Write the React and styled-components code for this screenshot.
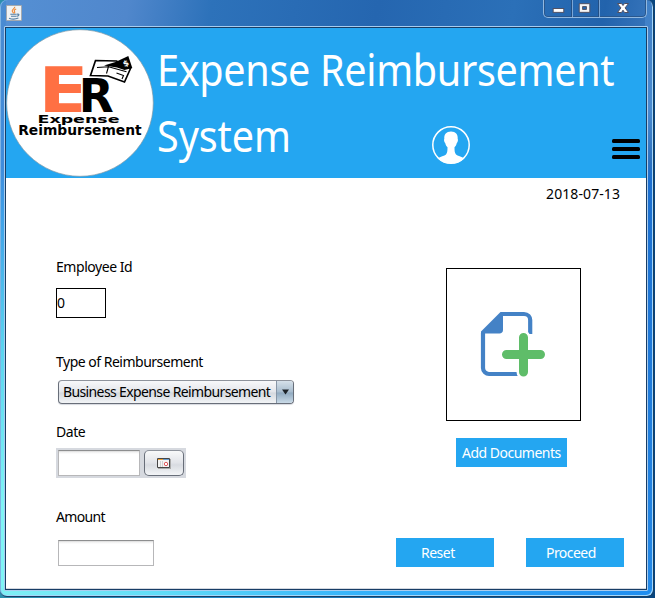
import React from 'react';
import styled, { createGlobalStyle } from 'styled-components';

const Global = createGlobalStyle`
  * { box-sizing: border-box; }
  html, body { margin: 0; padding: 0; overflow: hidden; }
  body { font-family: "Noto Sans", sans-serif; font-size: 14px; color: #000; }
`;

const Desktop = styled.div`
  width: 655px;
  height: 598px;
  background: linear-gradient(90deg, #2b8fae 0, #2187c8 35%, #07457f 100%);
`;

const Window = styled.div`
  display: flex;
  flex-direction: column;
  width: 654px;
  height: 597px;
  padding: 0 5px 5px 4px;
  border: solid #173f66;
  border-width: 0 1px 1px 0;
  border-radius: 7px 7px 7px 7px;
  box-shadow: inset -1px -1px 0 #a5d8fa, inset 1px 0 0 #7fb4e4;
  background:
    linear-gradient(90deg, #7ff0f5 0, #5fdcf8 25%, #35b2fa 55%, #1f8df0 100%) 0 100% / 100% 8px no-repeat,
    linear-gradient(180deg, #4b8bd0 0, #3f8cdc 28%, #3fa0e8 36%, #5ad4f0 58%, #7ff5f6 85%) 0 0 / 6px 100% no-repeat,
    linear-gradient(180deg, #3f7fc6 0, #4a8bd0 18%, #2d72c0 27%, #1c6fd0 30%, #2389e8 100%) 100% 0 / 8px 100% no-repeat,
    linear-gradient(100deg, #5590d4 0, #5087cc 17%, #2d72ba 28%, #2566b0 50%, #2b70b8 68%, #2263ac 80%, #437fc4 90%, #4780c4 100%);
`;

const TitleBar = styled.div`
  display: flex;
  justify-content: space-between;
  height: 26px;
  flex: none;
  padding: 0 0 0 2px;
`;

const AppIcon = styled.svg`
  width: 16px;
  height: 16px;
  margin-top: 5px;
`;

const Controls = styled.div`
  display: flex;
  width: 104px;
  height: 18px;
  margin-right: 1px;
  border: 1px solid #91b8e0;
  border-top: 0;
  border-radius: 0 0 5px 5px;
  box-shadow: inset 0 -1px 0 #29578d, inset 1px 0 0 #29578d, inset -1px 0 0 #29578d;
`;

const Control = styled.div`
  width: ${(p) => p.$w}px;
  height: 17px;
  border-right: ${(p) => (p.$last ? 0 : '1px solid #234f85')};
  box-shadow: ${(p) => (p.$last ? 'none' : '1px 0 0 #7ba6d6')};
  svg { display: block; width: 100%; height: 17px; }
`;

const Client = styled.div`
  display: flex;
  flex-direction: column;
  width: 644px;
  height: 565px;
  border: 1px solid #a9cdef;
  border-radius: 1px;
  flex: none;
`;

const Pane = styled.div`
  flex: 1;
  border: 1px solid #173d66;
  background: #fff;
  box-shadow: inset 0 -1px 0 #d4d8e0;
`;

const Header = styled.header`
  display: grid;
  grid-template-columns: 151px 275px 1fr 28px;
  grid-template-rows: 75px 75px;
  height: 150px;
  padding-right: 6px;
  background: #24a6f1;
`;

const Logo = styled.svg`
  grid-row: 1 / 3;
  width: 150px;
  height: 150px;
`;

const TitleLine = styled.div`
  grid-column: ${(p) => (p.$wide ? '2 / 5' : '2 / 3')};
  font-size: 43px;
  line-height: 60px;
  padding-top: ${(p) => p.$top}px;
  height: 75px;
  letter-spacing: ${(p) => p.$spacing}px;
  transform: scaleX(0.92);
  transform-origin: 0 0;
  white-space: nowrap;
  color: #fff;
`;

const Avatar = styled.svg`
  width: 38px;
  height: 38px;
  margin-top: 23px;
`;

const Menu = styled.svg`
  width: 28px;
  height: 22px;
  margin-top: 35px;
`;

const Today = styled.div`
  height: 32px;
  padding-right: 26px;
  text-align: right;
  line-height: 32px;
  letter-spacing: 0.08px;
`;

const Content = styled.div`
  display: flex;
  justify-content: space-between;
  padding: 47px 22px 0 50px;
`;

const Form = styled.div`
  display: flex;
  flex-direction: column;
  align-items: flex-start;
  width: 240px;
`;

const Label = styled.label`
  height: 20px;
  line-height: 20px;
  letter-spacing: ${(p) => p.$spacing}px;
  margin-bottom: ${(p) => p.$gap}px;
  white-space: nowrap;
`;

const IdField = styled.div`
  width: 50px;
  height: 30px;
  margin-bottom: 34px;
  border: 1px solid #000;
  line-height: 28px;
`;

const Combo = styled.div`
  display: flex;
  width: 236px;
  height: 24px;
  margin: 0 0 18px 2px;
  border: 1px solid #686e79;
  border-top-color: #8e939c;
  border-radius: 4px;
  overflow: hidden;
  background: linear-gradient(#f7f8fa, #e4e6eb 48%, #d5d9df 55%, #f2f4f6);
  box-shadow: 0 1px 1px #d6d9df;
`;

const ComboText = styled.div`
  flex: 1;
  min-width: 0;
  padding-left: 4px;
  line-height: 22px;
  letter-spacing: ${(p) => p.$spacing}px;
  white-space: nowrap;
`;

const Arrow = styled.div`
  display: flex;
  flex: none;
  align-items: center;
  justify-content: center;
  width: 17px;
  border-left: 1px solid #8796a7;
  background: linear-gradient(#d6e1ea, #a9bdcf 48%, #92abc1 55%, #c9dae7);
`;

const DatePicker = styled.div`
  display: flex;
  justify-content: space-between;
  width: 130px;
  height: 30px;
  margin-bottom: 29px;
  padding: 2px 2px 1px;
  background: #d6d9df;
`;

const TextField = styled.div`
  width: ${(p) => p.$w}px;
  height: 26px;
  margin-left: ${(p) => p.$left || 0}px;
  border: 1px solid #b7b7b9;
  border-top-color: #8d8e8f;
  background: linear-gradient(#d4d4d4 0, #f0f0f0 1px, #fff 3px);
`;

const CalendarButton = styled.div`
  display: flex;
  align-items: center;
  justify-content: center;
  width: 40px;
  height: 26px;
  border: 1px solid #686e79;
  border-top-color: #8e939c;
  border-radius: 5px;
  background: linear-gradient(#f8f9fa, #e2e4e9 48%, #d8dbe1 58%, #f3f5f7);
`;

const Side = styled.div`
  display: flex;
  flex-direction: column;
  width: 228px;
  padding-top: 11px;
`;

const Preview = styled.div`
  width: 135px;
  height: 153px;
  margin: 0 0 17px 50px;
  border: 1px solid #000;
  svg { display: block; width: 133px; height: 151px; }
`;

const Button = styled.div`
  width: ${(p) => p.$w}px;
  height: 29px;
  margin-left: ${(p) => p.$left || 0}px;
  padding-left: ${(p) => p.$pad}px;
  line-height: 30px;
  letter-spacing: ${(p) => p.$spacing}px;
  color: #fff;
  background: #24a6f1;
  white-space: nowrap;
`;

const Actions = styled.div`
  display: flex;
  justify-content: space-between;
  margin-top: 71px;
`;

function JavaIcon() {
  return (
    <AppIcon viewBox="0 0 16 16">
      <rect width="16" height="16" rx="1" fill="#a5aab0" />
      <rect x="1" y="1" width="14" height="14" fill="#f0f2f4" />
      <path d="M8.7 1.8C9.4 3.4 5.8 4.3 6.2 6c.2 1 1.3 1.5 1.5 2.4M10.2 4.1C7.6 5.1 8 6 8.700 6.800c.3.5-.1 1.100-.5 1.400" fill="none" stroke="#ef8630" strokeWidth="1.1" />
      <path d="M4.3 9.300h6.400M5 11.200h5M3 13.200c2.500 1 7 .9 9.400-.2M11 9.200c3.200-.6 2 2-.7 2.100" fill="none" stroke="#557fa4" strokeWidth="1.1" />
    </AppIcon>
  );
}

function CompanyLogo() {
  return (
    <Logo viewBox="6 28 150 150" fontFamily='"DejaVu Sans", sans-serif' fontWeight="700">
      <circle cx="80" cy="103" r="73.3" fill="#fff" stroke="#8298a5" strokeWidth=".7" />
      <text x="38.6" y="111.500" fontSize="63" textLength="50" lengthAdjust="spacingAndGlyphs" fill="#ff7043">E</text>
      <path d="M79.500 75h32v5h-32z" fill="#fff" />
      <text x="78.800" y="111.500" fontSize="47" textLength="35" lengthAdjust="spacingAndGlyphs" stroke="#fff" strokeWidth="3" paintOrder="stroke" fill="#000">R</text>
      <path d="M95.500 60.500l21 .5 14 7.500-6 13.500-16.500-6-17.500-.5z" fill="#fff" stroke="#000" strokeWidth="1.700" />
      <path d="M108.500 66.500l-2 7M97 67.500l11.500-.8 18 5M116.500 73l7 2.500-1.500 3.500" fill="none" stroke="#000" strokeWidth="1.100" />
      <path d="M104 65.500l11.500-3.600 12.800-6 4 12-7.800 2-7.500-2.400z" fill="#000" />
      <text x="123" y="66" fontSize="8" fill="#fff" transform="rotate(-25 126 63)">$</text>
      <text x="37.500" y="123.300" fontSize="10.200" textLength="82" lengthAdjust="spacingAndGlyphs">Expense</text>
      <text x="18.200" y="134.500" fontSize="13.500" textLength="123.500" lengthAdjust="spacingAndGlyphs">Reimbursement</text>
    </Logo>
  );
}

export default function App() {
  return (
    <Desktop>
      <Global />
      <Window>
        <TitleBar>
          <JavaIcon />
          <Controls>
            <Control $w={28}>
              <svg viewBox="0 0 28 17"><rect x="9.5" y="8.5" width="11" height="4" fill="#fff" stroke="#504f61" /></svg>
            </Control>
            <Control $w={27}>
              <svg viewBox="0 0 27 17">
                <path fillRule="evenodd" d="M7.5 3.5h11v9h-11z M11 6.500h4v3h-4z" fill="#f5f5f5" stroke="#504f61" />
              </svg>
            </Control>
            <Control $w={47} $last>
              <svg viewBox="0 0 47 17">
                <path d="M18.5 3.5h4l1.5 2 1.5-2h4l-3.4 4.4 3.4 4.6h-4L24 10.2l-1.5 2.3h-4l3.4-4.6z" fill="#fff" stroke="#504f61" />
              </svg>
            </Control>
          </Controls>
        </TitleBar>
        <Client>
          <Pane>
            <Header>
              <CompanyLogo />
              <TitleLine $wide $top={12} $spacing={-0.35}>Expense Reimbursement</TitleLine>
              <TitleLine $top={3} $spacing={-0.1}>System</TitleLine>
              <Avatar viewBox="0 0 38 38">
                <circle cx="19" cy="19" r="18.2" fill="none" stroke="#fff" strokeWidth="1.5" />
                <path d="M19 5.5c-4.700 0-7 3-6.700 7.200-.7 1 0 3.600.9 4.200.5 2.200 1.400 3.400 2.300 4.400 0 3-.1 5.700-1.500 7.200-1.500 1.600-5.600 2-8.300 3.900C9 35.500 13.500 37.500 19 37.500s10-2 13.300-5.100c-2.700-1.900-6.800-2.300-8.300-3.900-1.400-1.500-1.500-4.200-1.500-7.200.9-1 1.800-2.200 2.300-4.400.9-.6 1.600-3.200.9-4.200.3-4.200-2-7.200-6.700-7.200z" fill="#fff" />
              </Avatar>
              <Menu viewBox="0 0 28 22">
                <rect y="1" width="28" height="4" rx="1.5" />
                <rect y="9" width="28" height="4" rx="1.5" />
                <rect y="17" width="28" height="4" rx="1.5" />
              </Menu>
            </Header>
            <Today>2018-07-13</Today>
            <Content>
              <Form>
                <Label $gap={11} $spacing={-0.45}>Employee Id</Label>
                <IdField>0</IdField>
                <Label $gap={8} $spacing={-0.5}>Type of Reimbursement</Label>
                <Combo>
                  <ComboText $spacing={-0.62}>Business Expense Reimbursement</ComboText>
                  <Arrow>
                    <svg width="7" height="6" viewBox="0 0 7 6"><path d="M0 .5h7L3.500 5.500z" fill="#1c2228" /></svg>
                  </Arrow>
                </Combo>
                <Label $gap={6} $spacing={-0.45}>Date</Label>
                <DatePicker>
                  <TextField $w={82} />
                  <CalendarButton>
                    <svg width="14" height="11" viewBox="0 0 14 11">
                      <path d="M1 1h13v10H1z" fill="#aaa" />
                      <path d="M.5.5h12v9H.5z" fill="#f4f4f4" stroke="#454545" />
                      <path d="M1 1h5v1H1z" fill="#f0a030" />
                      <path d="M6 1h6v1H6z" fill="#6699cc" />
                      <path d="M3.500 3v6M5.500 3v6" stroke="#d0d0d0" />
                      <circle cx="9" cy="6" r="1.700" fill="#fff" stroke="#e0595c" />
                    </svg>
                  </CalendarButton>
                </DatePicker>
                <Label $gap={13} $spacing={-0.65}>Amount</Label>
                <TextField $w={96} $left={2} />
              </Form>
              <Side>
                <Preview>
                  <svg viewBox="447 269 133 151">
                    <path d="M502 314h22c4 0 6.200 3 6.200 6v14M483 333v35c0 3.500 3 6 6 6h36" fill="none" stroke="#4482c6" strokeWidth="4.200" />
                    <path d="M481 331.500L500.500 312h2.500v18c0 2-1.500 3.500-3.500 3.500H481z" fill="#4482c6" />
                    <path d="M523.500 337.500v34.500M506.500 354.500h34" stroke="#fff" strokeWidth="14" strokeLinecap="round" />
                    <path d="M523.500 337.500v34.500M506.500 354.500h34" stroke="#5fbd69" strokeWidth="9" strokeLinecap="round" />
                  </svg>
                </Preview>
                <Button $w={111} $left={60} $pad={6} $spacing={-0.5}>Add Documents</Button>
                <Actions>
                  <Button $w={98} $pad={25} $spacing={-0.5}>Reset</Button>
                  <Button $w={98} $pad={20} $spacing={-0.55}>Proceed</Button>
                </Actions>
              </Side>
            </Content>
          </Pane>
        </Client>
      </Window>
    </Desktop>
  );
}
